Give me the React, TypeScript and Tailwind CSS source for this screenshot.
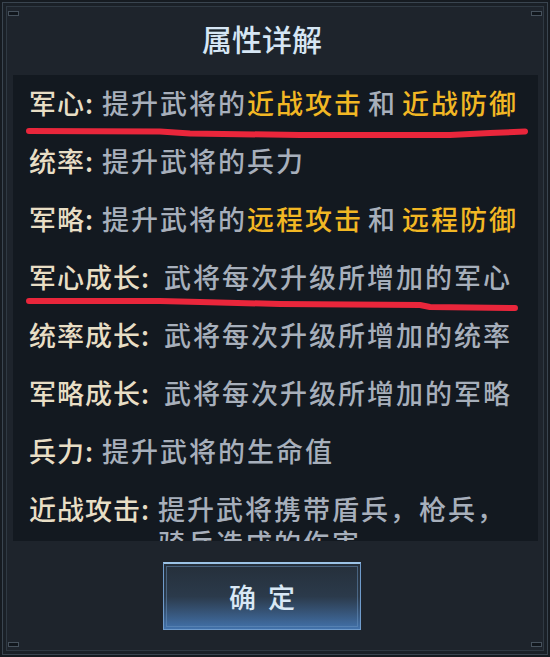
import React from "react";

const FONT = { fontFamily: '"Noto Sans CJK SC", "Noto Sans", sans-serif' };

function Row({ label, wide, children }: { label: string; wide?: boolean; children: React.ReactNode }) {
  return (
    <div className="flex items-start leading-[34px] font-medium">
      <span className="shrink-0 text-[27px] tracking-[1px] text-[#e8dec5]">
        {label}
        <span className="tracking-normal">:</span>
      </span>
      <span className={`${wide ? "ml-[15px]" : "ml-[9px]"} text-[27px] tracking-[2px] text-[#a7afbb]`}>{children}</span>
    </div>
  );
}

function Hi({ children }: { children: React.ReactNode }) {
  return <span className="text-[#f2b724]">{children}</span>;
}

function Corner({ pos }: { pos: string }) {
  return <div className={`absolute w-[11px] h-[5px] bg-[#11161c] border border-[#46515c] ${pos}`} />;
}

export default function App() {
  return (
    <div className="w-[550px] h-[657px] bg-[#161b21] p-[2px]" style={FONT}>
      <div className="relative h-full border border-[#3a4550] p-[3px] bg-[#1a2027]">
        <div className="relative h-full border border-[#2f3943] bg-[#1e242c] flex flex-col">
          <Corner pos="left-[1px] top-[4px]" />
          <Corner pos="right-[1px] top-[4px]" />
          <Corner pos="left-[1px] bottom-[3px]" />
          <Corner pos="right-[1px] bottom-[3px]" />

          <div className="h-[61px] flex items-center justify-center pr-[26px] text-[30px] font-medium text-[#d6e6f4] leading-none">
            属性详解
          </div>

          <div className="relative mt-[7px] ml-[6px] mr-[5px] h-[466px] bg-[#131920] overflow-hidden pl-[16px] pt-[11px]">
            <div className="flex flex-col gap-[24px]">
              <Row label="军心">
                提升武将的<Hi>近战攻击</Hi>
                <span className="mx-[5px]">和</span>
                <Hi>近战防御</Hi>
              </Row>
              <Row label="统率">提升武将的兵力</Row>
              <Row label="军略">
                提升武将的<Hi>远程攻击</Hi>
                <span className="mx-[5px]">和</span>
                <Hi>远程防御</Hi>
              </Row>
              <Row label="军心成长" wide>武将每次升级所增加的军心</Row>
              <Row label="统率成长" wide>武将每次升级所增加的统率</Row>
              <Row label="军略成长" wide>武将每次升级所增加的军略</Row>
              <Row label="兵力">提升武将的生命值</Row>
              <Row label="近战攻击">
                提升武将携带盾兵，枪兵，
                <br />
                骑兵造成的伤害
              </Row>
            </div>
          </div>

          <div className="mt-[21px] ml-[156px] w-[198px] h-[68px] border border-[#6f9bcb] border-t-2 border-t-[#9cc3e6] p-[2px] bg-gradient-to-b from-[#252f3a] via-[#2b3a4b] to-[#4272ab]">
            <div className="relative h-full border border-[#6a94c0]/50 flex items-center justify-center">
              <span className="text-[27px] font-medium tracking-[12px] pl-[12px] text-[#d9e8f5] leading-none">确定</span>
            </div>
          </div>

          <svg className="absolute left-0 top-0 pointer-events-none" width="540" height="645" viewBox="7 7 540 645">
            <path
              d="M29 131 L160 131.5 L190 133.5 L300 135 L450 135 L490 133 L525 131.5"
              stroke="#e9263b"
              strokeWidth="6"
              strokeLinecap="round"
              strokeLinejoin="round"
              fill="none"
            />
            <path
              d="M29 301 L160 301 L200 302 L280 304 L420 305 L430 307 L515 308"
              stroke="#e9263b"
              strokeWidth="6"
              strokeLinecap="round"
              strokeLinejoin="round"
              fill="none"
            />
          </svg>
        </div>
      </div>
    </div>
  );
}
